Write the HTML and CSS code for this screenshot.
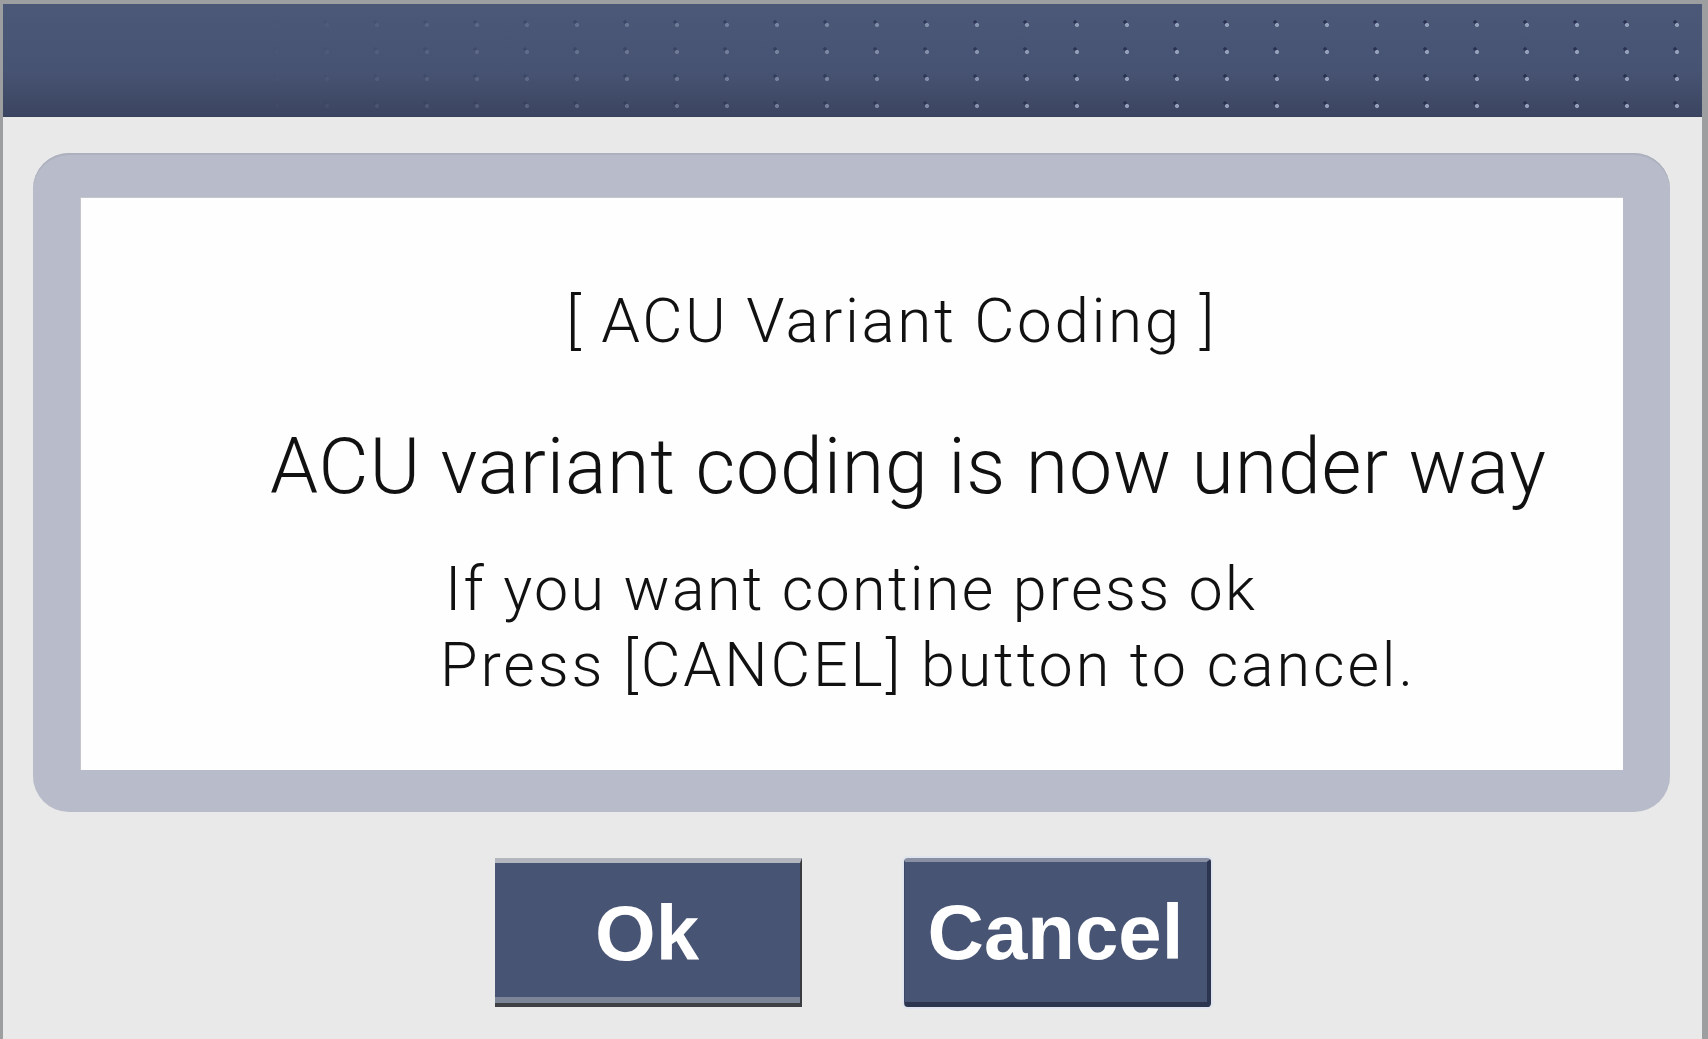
FILE: index.html
```html
<!DOCTYPE html>
<html lang="en">
<head>
  <meta charset="UTF-8">
  <title>ACU Variant Coding</title>
  <link rel="stylesheet" href="styles.css">
</head>
<body>

  <div class="window">
    <div class="title-bar"></div>

    <div class="panel">
      <div class="message">
        <p class="msg-title">[ ACU Variant Coding ]</p>
        <p class="msg-main">ACU variant coding is now under way</p>
        <p class="msg-info">
          <span class="line">If you want contine press ok</span>
          <span class="line line-cancel">Press [CANCEL] button to cancel.</span>
        </p>
      </div>
    </div>

    <div class="buttons">
      <button class="btn btn-ok" type="button">Ok</button>
      <button class="btn btn-cancel" type="button">Cancel</button>
    </div>
  </div>

</body>
</html>
```

FILE: styles.css
```css
html, body {
  margin: 0;
  height: 100%;
}
body {
  background-color: #e8e9e8;
  font-family: Roboto, "Liberation Sans", Arial, sans-serif;
  color: #111;
}
.window {
  box-sizing: border-box;
  height: 1039px;
  border-top: 4px solid #9d9e9f;
  border-left: 3px solid #9d9e9f;
  border-right: 6px solid #9d9e9f;
  background-color: #e8e9e8;
}
.title-bar {
  position: relative;
  height: 113px;
  background: linear-gradient(to bottom, #4b5877 0%, #475372 60%, #3b4561 100%);
  border-bottom: 1px solid #38415a;
  box-sizing: border-box;
}
/* the little embossed dots, fading in from the left */
.title-bar::after {
  content: "";
  position: absolute;
  inset: 0;
  background-image:
    radial-gradient(circle at 26px 15px, #95a0ba 1.6px, transparent 2.4px),
    radial-gradient(circle at 24px 12px, #283150 1.4px, transparent 2.1px);
  background-size: 50px 27px;
  background-position: -2px 6px;
  -webkit-mask-image: linear-gradient(to right, transparent 15%, #000 65%);
  mask-image: linear-gradient(to right, transparent 15%, #000 65%);
}
.panel {
  margin: 36px 32px 0 30px;
  padding: 44px 47px 42px;
  background-color: #b8bbc9;
  border-radius: 36px;
  box-shadow: inset 0 2px 0 #adb0bd;
}
.message {
  box-sizing: border-box;
  height: 573px;
  padding-top: 93px;
  background-color: #fefefe;
  box-shadow: inset 1px 1px 0 #c4c6cc;
}
.message p {
  margin: 0;
  font-weight: 300;
  line-height: 1;
  white-space: nowrap;
}
.msg-title {
  padding-left: 486px;
  font-size: 62px;
  letter-spacing: 2.6px;
}
.msg-main {
  margin-top: 77px !important;
  padding-left: 190px;
  font-size: 77px;
  letter-spacing: 0.85px;
}
.msg-info {
  margin-top: 45px !important;
  padding-left: 365px;
  font-size: 61px;
  line-height: 76px !important;
}
.msg-info .line {
  display: block;
  letter-spacing: 2.3px;
}
.msg-info .line-cancel {
  margin-left: -5px;
  letter-spacing: 2.9px;
}
.buttons {
  display: flex;
  justify-content: center;
  gap: 102px;
  margin-top: 46px;
}
.btn {
  box-sizing: border-box;
  width: 307px;
  height: 149px;
  padding: 0;
  background-color: #475473;
  color: #fff;
  font-family: "Liberation Sans", Arial, sans-serif;
  font-size: 78px;
  font-weight: bold;
  line-height: 1;
  cursor: pointer;
}
.btn-ok {
  border: none;
  border-top: 5px solid #b3b6bf;
  border-right: 2px solid #3a3b40;
  border-bottom: 4px solid #3f4044;
  box-shadow: inset 0 -6px 0 #7c8497;
}
.btn-cancel {
  border-top: 4px solid #8990a4;
  border-left: 1px solid #3d4866;
  border-right: 4px solid #2b3550;
  border-bottom: 5px solid #2b3550;
  border-radius: 4px;
  box-shadow: 0 0 0 2px #dfe4ee;
}
```
